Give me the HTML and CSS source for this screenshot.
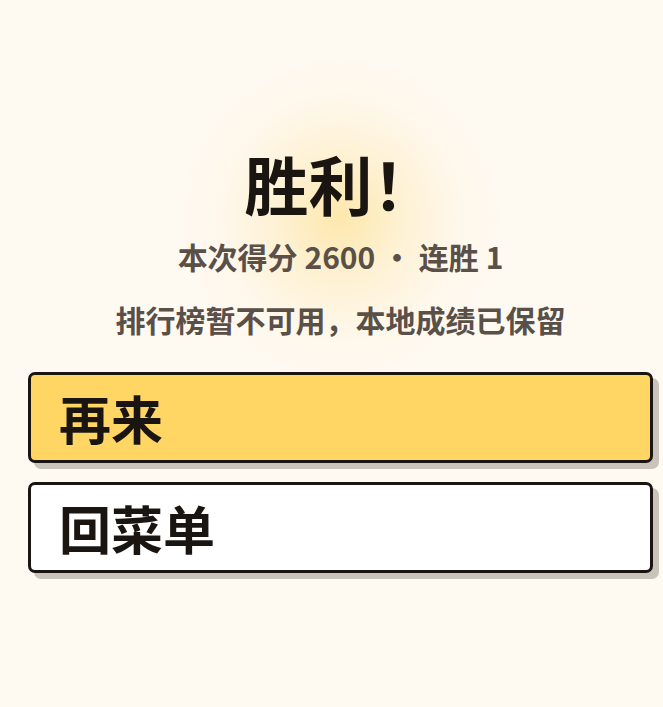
FILE: index.html
```html
<!DOCTYPE html>
<html lang="zh-CN">
<head>
<meta charset="utf-8">
<title>胜利</title>
<link rel="stylesheet" href="styles.css">
</head>
<body>
<main class="screen">
  <section class="hero">
    <h1 class="title">胜利！</h1>
    <p class="score">本次得分 2600 • 连胜 1</p>
    <p class="note">排行榜暂不可用，本地成绩已保留</p>
  </section>
  <div class="actions">
    <button class="btn btn-primary" type="button">再来</button>
    <button class="btn btn-plain" type="button">回菜单</button>
  </div>
</main>
</body>
</html>
```
FILE: styles.css
```css
html, body {
  margin: 0;
  padding: 0;
}
body {
  background: #fef9f1;
  font-family: "Noto Sans CJK SC", "Noto Sans", sans-serif;
  width: 663px;
  height: 707px;
  overflow: hidden;
}
.screen {
  box-sizing: border-box;
  min-height: 707px;
  padding: 0 10px 0 28px;
  display: flex;
  flex-direction: column;
  background: radial-gradient(circle 162px at 340px 218px, rgba(253, 228, 160, 0.85) 0%, rgba(254, 236, 190, 0.55) 40%, rgba(254, 244, 222, 0.25) 75%, rgba(254, 249, 241, 0) 100%);
}
.hero {
  padding-top: 142px;
  text-align: center;
}
.title {
  margin: 0;
  font-size: 64px;
  line-height: 80px;
  font-weight: 700;
  color: #1a1511;
}
.score {
  margin: 16px 0 0;
  font-size: 30px;
  line-height: 36px;
  font-weight: 700;
  color: #5a5048;
}
.note {
  margin: 27px 0 0;
  font-size: 30px;
  line-height: 36px;
  font-weight: 700;
  color: #5a5048;
}
.actions {
  margin-top: 35px;
  display: flex;
  flex-direction: column;
  gap: 19px;
}
.btn {
  display: flex;
  align-items: center;
  height: 91px;
  box-sizing: border-box;
  padding: 0 28px;
  border: 3px solid #1a1511;
  border-radius: 7px;
  box-shadow: 6px 6px 0 #c9c3bc;
  font-family: "Noto Sans CJK SC", "Noto Sans", sans-serif;
  font-size: 52px;
  font-weight: 700;
  color: #1a1511;
  text-align: left;
  cursor: pointer;
}
.btn-primary {
  background: #ffd563;
}
.btn-plain {
  background: #ffffff;
}
```
